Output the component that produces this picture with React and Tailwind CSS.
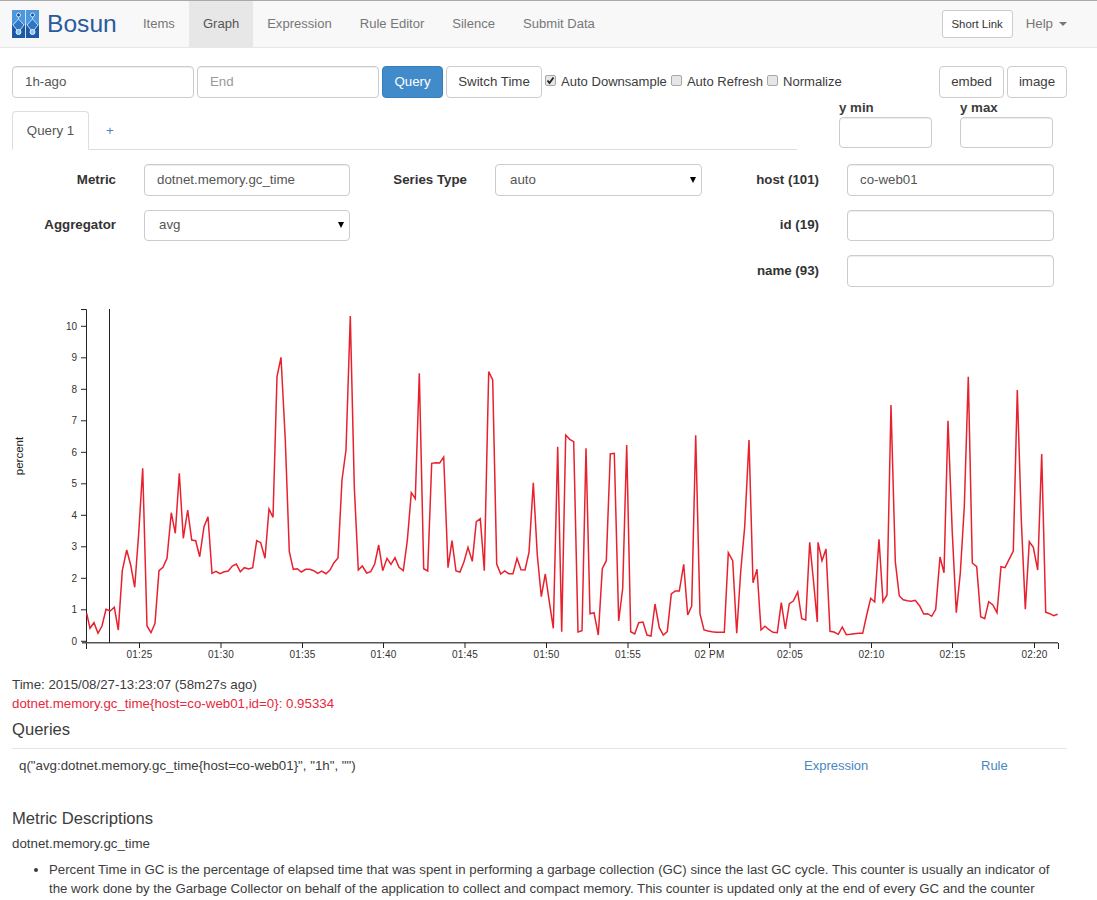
const font = "font-['Liberation_Sans',Arial,sans-serif]";

const navItems = ["Items", "Graph", "Expression", "Rule Editor", "Silence", "Submit Data"];

// traced from the graph, x offset per slice
const slice1 = [260,940,270,985,282,968,294,1000,306,978,318,928,331,933,343,922,355,990,367,812,380,750,392,795,404,862,416,700,428,505,441,978,453,998,465,970,477,812,489,802,501,775,514,638,526,700,538,520,550,715,563,630,575,720,587,722,599,770,612,680,624,650,636,820,648,814,660,821,673,815,685,813,697,798,709,792,721,815,733,803,746,807,758,803,770,722,782,728,795,775,807,627,819,652,831,230,843,172,856,420,868,755,880,808,892,806,904,816,917,808,929,808,941,812,953,820,965,813,978,821,990,810,1002,788,1014,774,1026,540,1038,450,1051,48,1063,560,1075,810,1087,798,1100,819];
const slice2 = [17,815,29,792,41,735,53,812,66,775,78,793,90,773,102,802,115,812,127,722,139,578,151,596,163,220,176,806,188,813,200,490,212,488,224,489,236,471,249,803,261,722,273,813,285,816,297,785,309,742,322,784,334,665,346,656,358,812,371,215,383,240,395,792,407,822,419,813,431,821,444,821,456,775,468,809,480,810,492,757,505,548,517,765,529,890,541,822,553,905,565,985,578,440,590,995,602,405,614,418,626,425,639,996,651,992,663,445,675,941,687,938,700,1005,712,806,724,782,736,462,748,460,761,963,773,865,785,435,797,995,809,1002,821,968,834,966,846,1005,858,1008,870,912,883,983,895,1005,907,995,919,882,931,873,943,873,956,793,968,945,980,918,992,406,1005,942,1017,990,1029,993,1041,995,1053,997,1066,997,1078,997,1090,758];
const slice3 = [8,782,20,1000,32,815,44,680,57,420,69,848,81,808,93,990,105,979,117,989,129,997,142,998,154,908,166,987,178,911,190,903,203,876,215,956,227,960,239,727,251,850,262,966,264,727,276,782,288,747,300,994,312,996,325,1003,337,981,349,1004,361,1003,373,1001,386,1000,398,1000,410,945,422,895,434,906,447,718,459,905,471,885,483,315,496,785,508,888,520,899,532,902,544,904,556,901,569,918,581,942,593,941,605,949,617,928,630,771,642,818,654,362,667,700,679,938,691,820,703,620,715,230,727,789,740,800,752,950,764,956,776,905,788,914,801,938,813,800,825,803,837,779,850,753,862,270,874,660,886,928,898,725,910,742,923,810,935,462,947,937,959,941,971,947,983,943];

const toPoints = (arr, offset) => {
  const out = [];
  for (let i = 0; i < arr.length; i += 2) {
    out.push(`${(offset + arr[i] / 3).toFixed(1)},${(300 + arr[i + 1] / 3).toFixed(1)}`);
  }
  return out;
};

const linePoints = [...toPoints(slice1, 0), ...toPoints(slice2, 365), ...toPoints(slice3, 730)].join(" ");

const yTicks = [10, 9, 8, 7, 6, 5, 4, 3, 2, 1, 0];
const xTicks = [
  [139.5, "01:25"], [221, "01:30"], [302.5, "01:35"], [383.5, "01:40"], [465, "01:45"], [546.5, "01:50"],
  [628, "01:55"], [709.5, "02 PM"], [790, "02:05"], [871.5, "02:10"], [952.5, "02:15"], [1034.5, "02:20"],
];

function Logo() {
  return (
    <svg width="27" height="28" viewBox="0 0 27 28" className="shrink-0">
      <rect width="27" height="28" fill="#4a98de" />
      <rect y="15" width="27" height="13" fill="#1c5aa6" />
      <path d="M6.5 9 L1 15 L6.5 22 L12 15 Z M20.5 9 L15 15 L20.5 22 L26 15 Z" fill="#2f76c4" />
      <rect x="13" width="1" height="28" fill="#cfe2f5" />
      <path d="M6.5 5 V9 L1 15 L6.5 22 L12 15 L6.5 9 M20.5 5 V9 L15 15 L20.5 22 L26 15 L20.5 9" fill="none" stroke="#bcd9f2" strokeWidth="1" />
      <circle cx="6.5" cy="5" r="2" fill="#1c4f96" stroke="#d7e8f7" />
      <circle cx="20.5" cy="5" r="2" fill="#1c4f96" stroke="#d7e8f7" />
      <circle cx="6.5" cy="22" r="2.5" fill="#8cc4ef" stroke="#e3f0fa" />
      <circle cx="20.5" cy="22" r="2.5" fill="#8cc4ef" stroke="#e3f0fa" />
    </svg>
  );
}

function Check({ checked }) {
  return (
    <span className="relative w-[11px] h-[11px] mb-[3px] shrink-0 bg-[#e6e6e6] border border-[#a8a8a8] rounded-[2px]">
      {checked && (
        <svg width="11" height="11" viewBox="0 0 11 11" className="absolute -left-px -top-px">
          <path d="M2.5 5.5 L4.5 8 L8.5 2.5" fill="none" stroke="#222" strokeWidth="1.8" />
        </svg>
      )}
    </span>
  );
}

function Graph() {
  return (
    <svg width="1097" height="370" viewBox="0 300 1097 370" className="block">
      <text x="0" y="0" transform="translate(23 456) rotate(-90)" textAnchor="middle" fontSize="11.5" fill="#222" fontFamily="Liberation Sans">percent</text>
      <path d="M81 309.5 H86.5 V649" fill="none" stroke="#222" strokeWidth="1" />
      <line x1="82" x2="1058" y1="642.7" y2="642.7" stroke="#555" strokeWidth="1.6" />
      <line x1="1058.5" x2="1058.5" y1="643" y2="649" stroke="#222" />
      {yTicks.map((t) => {
        const y = 641.3 - t * 31.5;
        return (
          <g key={t}>
            <line x1="81" x2="86" y1={y} y2={y} stroke="#222" />
            <text x="77" y={y + 3.5} textAnchor="end" fontSize="10" fill="#333" fontFamily="Liberation Sans">{t}</text>
          </g>
        );
      })}
      {xTicks.map(([x, label]) => (
        <g key={label}>
          <line x1={x} x2={x} y1="643" y2="648" stroke="#222" />
          <text x={x} y="658" textAnchor="middle" fontSize="10" letterSpacing="0.2" fill="#333" fontFamily="Liberation Sans">{label}</text>
        </g>
      ))}
      <line x1="109.5" x2="109.5" y1="309" y2="643" stroke="#222" />
      <polyline points={linePoints} fill="none" stroke="#e8212e" strokeWidth="1.5" />
    </svg>
  );
}

function Field({ label, labelWidth, value, inputWidth, select }) {
  return (
    <div className="flex items-center">
      <label className={`${labelWidth} text-right font-bold text-[#333]`}>{label}</label>
      {select ? (
        <div className={`${inputWidth} ml-[28px] h-[31.5px] flex items-center justify-between border border-[#ccc] rounded-[4px] bg-white pl-[14px] pr-[5px] text-[#555]`}>
          <span>{value}</span>
          <span className="w-0 h-0 border-x-[3.5px] border-x-transparent border-t-[6px] border-t-black"></span>
        </div>
      ) : (
        <input
          readOnly
          value={value || ""}
          className={`${inputWidth} ml-[28px] h-[31.5px] border border-[#ccc] rounded-[4px] bg-white px-[12px] text-[#555] shadow-[inset_0_1px_1px_rgba(0,0,0,0.075)]`}
        />
      )}
    </div>
  );
}

export default function App() {
  return (
    <div className={`${font} w-[1097px] h-[900px] overflow-hidden bg-white text-[13.3px] leading-[20px] text-[#3c3c3c]`}>
      {/* NAVBAR */}
      <nav className="h-[48px] flex items-center bg-[#f8f8f8] border-t border-t-[#a9a9a9] border-b border-b-[#e7e7e7] pl-[12px] pr-[30px]">
        <Logo />
        <span className="ml-[8px] w-[82px] text-[24.6px] text-[#2a5a9e]">Bosun</span>
        <div className="flex h-full text-[13.05px]">
          {navItems.map((item) => (
            <a key={item} className={`flex items-center px-[14px] ${item === "Graph" ? "bg-[#e7e7e7] text-[#555]" : "text-[#777]"}`}>
              {item}
            </a>
          ))}
        </div>
        <button className="ml-auto h-[28px] w-[71px] bg-white border border-[#ccc] rounded-[3px] text-[11.4px] text-[#333]">Short Link</button>
        <span className="ml-[13px] text-[#777]">Help</span>
        <span className="ml-[6px] w-0 h-0 border-x-[4px] border-x-transparent border-t-[4px] border-t-[#777]"></span>
      </nav>

      {/* TIME ROW */}
      <div className="flex items-start mt-[18px] px-[12px]">
        <input readOnly value="1h-ago" className="w-[182px] h-[31.5px] border border-[#ccc] rounded-[4px] px-[12px] text-[#555] shadow-[inset_0_1px_1px_rgba(0,0,0,0.075)]" />
        <input readOnly placeholder="End" className="ml-[3px] w-[182px] h-[31.5px] border border-[#ccc] rounded-[4px] px-[12px] placeholder:text-[#999] shadow-[inset_0_1px_1px_rgba(0,0,0,0.075)]" />
        <button className="ml-[3px] w-[61px] h-[31.5px] bg-[#428bca] border border-[#357ebd] rounded-[4px] text-white">Query</button>
        <button className="ml-[3px] w-[96px] h-[31.5px] bg-white border border-[#ccc] rounded-[4px]">Switch Time</button>
        <div className="ml-[3px] h-[31.5px] pt-[1px] flex items-center text-[13.05px]">
          <Check checked />
          <span className="ml-[5px]">Auto Downsample</span>
          <span className="ml-[4px]"></span>
          <Check />
          <span className="ml-[5px]">Auto Refresh</span>
          <span className="ml-[4px]"></span>
          <Check />
          <span className="ml-[5px]">Normalize</span>
        </div>
        <button className="ml-auto w-[65px] h-[31.5px] bg-white border border-[#ccc] rounded-[4px]">embed</button>
        <button className="ml-[3px] mr-[18px] w-[60px] h-[31.5px] bg-white border border-[#ccc] rounded-[4px]">image</button>
      </div>

      {/* TABS + Y RANGE */}
      <div className="flex items-start pl-[12px] h-[66.5px]">
        <div className="w-[785px] h-[39px] mt-[13px] flex items-end border-b border-[#ddd]">
          <div className="w-[77px] h-[39px] mb-[-1px] pt-[1px] flex items-center justify-center bg-white border border-[#ddd] border-b-white rounded-t-[4px] text-[#555]">Query 1</div>
          <a className="ml-[17px] mb-[8px] text-[#4a86c2]">+</a>
        </div>
        <div className="ml-[42px] w-[93px]">
          <div className="mt-[1px] font-bold leading-[18px]">y min</div>
          <input readOnly className="w-[93px] h-[31.5px] border border-[#ccc] rounded-[4px] shadow-[inset_0_1px_1px_rgba(0,0,0,0.075)]" />
        </div>
        <div className="ml-[28px] w-[93px]">
          <div className="mt-[1px] font-bold leading-[18px]">y max</div>
          <input readOnly className="w-[93px] h-[31.5px] border border-[#ccc] rounded-[4px] shadow-[inset_0_1px_1px_rgba(0,0,0,0.075)]" />
        </div>
      </div>

      {/* QUERY FORM */}
      <div className="flex h-[136px] items-start">
        <div className="w-[350px] flex flex-col gap-[14px]">
          <Field label="Metric" labelWidth="w-[116px]" inputWidth="w-[206px]" value="dotnet.memory.gc_time" />
          <Field label="Aggregator" labelWidth="w-[116px]" inputWidth="w-[206px]" value="avg" select />
        </div>
        <div className="w-[352px]">
          <Field label="Series Type" labelWidth="w-[117px]" inputWidth="w-[207px]" value="auto" select />
        </div>
        <div className="flex flex-col gap-[14px]">
          <Field label="host (101)" labelWidth="w-[117px]" inputWidth="w-[207px]" value="co-web01" />
          <Field label="id (19)" labelWidth="w-[117px]" inputWidth="w-[207px]" />
          <Field label="name (93)" labelWidth="w-[117px]" inputWidth="w-[207px]" />
        </div>
      </div>

      <Graph />

      {/* LEGEND */}
      <div className="px-[12px] mt-[5px]">
        <div className="leading-[19px]">Time: 2015/08/27-13:23:07 (58m27s ago)</div>
        <div className="leading-[19px] text-[#e8283c]">dotnet.memory.gc_time{"{"}host=co-web01,id=0{"}"}: 0.95334</div>
        <h4 className="mt-[7px] text-[16.6px] leading-[20px] pb-[8px] border-b border-[#e5e5e5] w-[1055px]">Queries</h4>
        <div className="flex py-[7px] pl-[7px] w-[1055px]">
          <span className="w-[785px]">q("avg:dotnet.memory.gc_time{"{"}host=co-web01{"}"}", "1h", "")</span>
          <a className="w-[177px] text-[#4a86c2] text-[13px]">Expression</a>
          <a className="text-[#4a86c2] text-[13px]">Rule</a>
        </div>
        <h4 className="mt-[26px] text-[16.6px] leading-[20px]">Metric Descriptions</h4>
        <div className="mt-[5px]">dotnet.memory.gc_time</div>
        <ul className="mt-[6px] pl-[37px] list-disc w-[1055px] leading-[19px] text-[13.23px]">
          <li>Percent Time in GC is the percentage of elapsed time that was spent in performing a garbage collection (GC) since the last GC cycle. This counter is usually an indicator of the work done by the Garbage Collector on behalf of the application to collect and compact memory. This counter is updated only at the end of every GC and the counter</li>
        </ul>
      </div>
    </div>
  );
}
